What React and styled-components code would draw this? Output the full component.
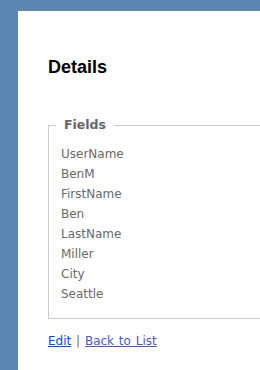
import React from 'react';
import styled, { createGlobalStyle } from 'styled-components';

const GlobalStyle = createGlobalStyle`
  html, body {
    margin: 0;
    padding: 0;
    overflow: hidden;
    background: #5c87b2;
  }
`;

const Page = styled.div`
  margin: 11px 0 0 18px;
  width: calc(100vw - 18px);
  height: calc(100vh - 11px);
  overflow: hidden;
  background: #fff;
  padding: 45px 0 0 30px;
  box-sizing: border-box;
  font-family: "DejaVu Sans", Verdana, sans-serif;
  font-size: 12px;
  color: #696969;
`;

const Title = styled.h2`
  margin: 0;
  font-family: "Liberation Sans", Arial, sans-serif;
  font-size: 18px;
  line-height: 22px;
  font-weight: bold;
  color: #000;
`;

const Fields = styled.fieldset`
  width: 500px;
  margin: 39px 0 0;
  padding: 11px 12px 14px;
  border: 1px solid #cccccc;
`;

const Legend = styled.legend`
  margin-left: -5px;
  padding: 0 8px;
  font-size: 12.5px;
  line-height: 16px;
  font-weight: bold;
  color: #666;
`;

const Item = styled.div`
  line-height: 20px;
`;

const Links = styled.p`
  margin: 12px 0 0;
  line-height: 20px;
  word-spacing: 1px;
  color: #696969;
`;

const Link = styled.a`
  color: ${p => (p.$visited ? '#4f57b9' : '#034af3')};
  text-decoration: underline;
`;

const values = ['UserName', 'BenM', 'FirstName', 'Ben', 'LastName', 'Miller', 'City', 'Seattle'];

export default function App() {
  return (
    <>
      <GlobalStyle />
      <Page>
        <Title>Details</Title>
        <Fields>
          <Legend>Fields</Legend>
          {values.map(v => (
            <Item key={v}>{v}</Item>
          ))}
        </Fields>
        <Links>
          <Link href="#edit">Edit</Link> | <Link href="#list" $visited>Back to List</Link>
        </Links>
      </Page>
    </>
  );
}
